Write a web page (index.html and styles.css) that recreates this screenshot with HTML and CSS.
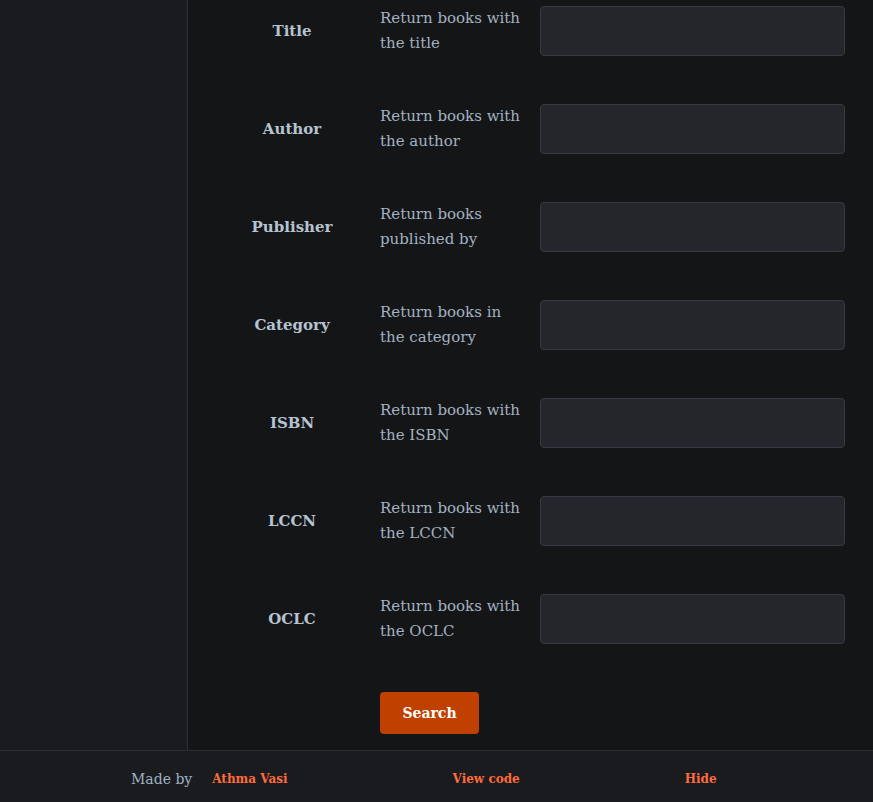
FILE: index.html
```html
<!DOCTYPE html>
<html lang="en">
<head>
<meta charset="utf-8">
<title>Search books</title>
<link rel="stylesheet" href="styles.css">
</head>
<body>
<div class="app">
  <div class="layout">
    <aside class="sidebar"></aside>
    <main class="main">
      <form class="form">
        <div class="row">
          <div class="label">Title</div>
          <div class="desc">Return books with the title</div>
          <input class="field" type="text">
        </div>
        <div class="row">
          <div class="label">Author</div>
          <div class="desc">Return books with the author</div>
          <input class="field" type="text">
        </div>
        <div class="row">
          <div class="label">Publisher</div>
          <div class="desc">Return books published by</div>
          <input class="field" type="text">
        </div>
        <div class="row">
          <div class="label">Category</div>
          <div class="desc">Return books in the category</div>
          <input class="field" type="text">
        </div>
        <div class="row">
          <div class="label">ISBN</div>
          <div class="desc">Return books with the ISBN</div>
          <input class="field" type="text">
        </div>
        <div class="row">
          <div class="label">LCCN</div>
          <div class="desc">Return books with the LCCN</div>
          <input class="field" type="text">
        </div>
        <div class="row">
          <div class="label">OCLC</div>
          <div class="desc">Return books with the OCLC</div>
          <input class="field" type="text">
        </div>
        <div class="actions">
          <button class="btn" type="button">Search</button>
        </div>
      </form>
    </main>
  </div>
  <footer class="footer">
    <span class="made">Made by</span>
    <a class="link author" href="#">Athma Vasi</a>
    <a class="link code" href="#">View code</a>
    <a class="link hide" href="#">Hide</a>
  </footer>
</div>
</body>
</html>
```

FILE: styles.css
```css
* { box-sizing: border-box; }
html, body { margin: 0; padding: 0; }
body {
  background: #141517;
  font-family: "DejaVu Serif", "Liberation Serif", serif;
  color: #b3c0cd;
  width: 873px;
  height: 802px;
  overflow: hidden;
}
.app { display: flex; flex-direction: column; height: 802px; }
.layout { display: flex; height: 750px; }
.sidebar {
  width: 188px;
  flex: none;
  background: #1a1b1e;
  border-right: 1px solid #2c2e33;
}
.main { flex: 1; padding: 6px 28px 0 16px; }
.form { display: flex; flex-direction: column; gap: 48px; }
.row {
  display: grid;
  grid-template-columns: 176px 144px 321px;
  align-items: center;
  height: 50px;
}
.label {
  text-align: center;
  font-weight: 700;
  font-size: 15px;
  color: #b6c3d0;
}
.desc {
  font-size: 15px;
  line-height: 25px;
  color: #a3b2c1;
}
.field {
  margin-left: 16px;
  width: 305px;
  height: 50px;
  background: #25262b;
  border: 1px solid #373a40;
  border-radius: 4px;
  outline: none;
}
.actions { padding-left: 176px; }
.btn {
  width: 99px;
  height: 42px;
  background: #c04000;
  color: #ffffff;
  border: none;
  border-radius: 4px;
  font-family: inherit;
  font-weight: 700;
  font-size: 14px;
}
.footer {
  height: 52px;
  background: #1a1b1e;
  border-top: 1px solid #2c2e33;
  display: flex;
  align-items: center;
  padding-left: 131px;
  padding-top: 5px;
}
.made { font-size: 14px; color: #9fb1c2; }
.link {
  color: #ff6b3d;
  font-weight: 700;
  font-size: 12px;
  text-decoration: none;
}
.author { margin-left: 20px; }
.code { margin-left: 165px; }
.hide { margin-left: 165px; }
```
